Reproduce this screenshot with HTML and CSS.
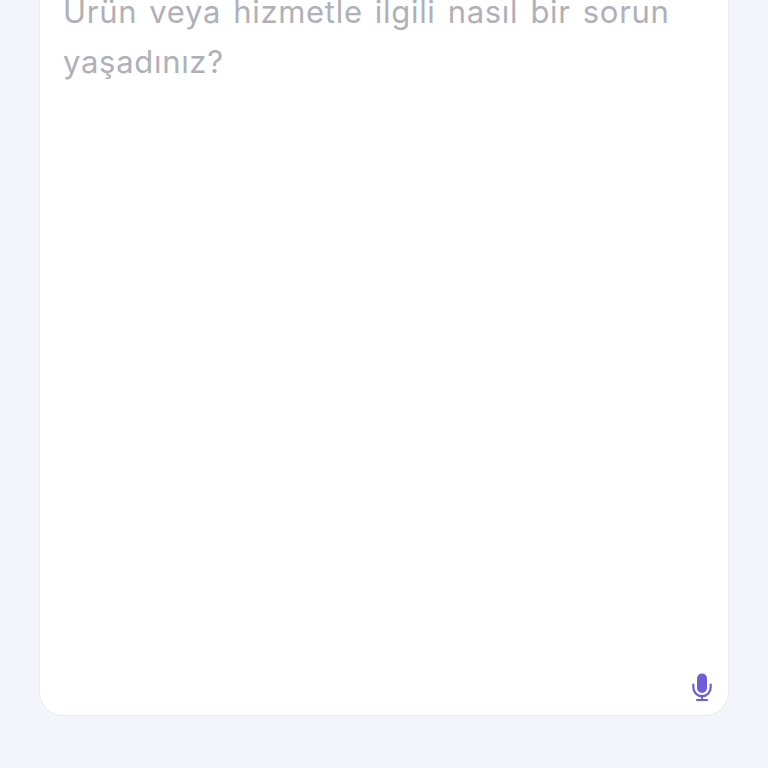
FILE: index.html
```html
<!DOCTYPE html>
<html lang="tr">
<head>
    <meta charset="UTF-8">
    <meta name="viewport" content="width=device-width, initial-scale=1.0">
    <title>Sorun bildir</title>
    <link rel="stylesheet" href="styles.css">
</head>
<body>
    <div class="page">
        <div class="card">
            <p class="placeholder">Ürün veya hizmetle ilgili nasıl bir sorun yaşadınız?</p>
            <div class="card-footer">
                <svg class="mic" width="20" height="28" viewBox="0 0 20 28" aria-hidden="true">
                    <rect x="5" y="0.5" width="10" height="19.5" rx="5" fill="#6f5fd6"/>
                    <path d="M1.3 11.5v3a8.7 8.7 0 0 0 17.4 0v-3" fill="none" stroke="#6f5fd6" stroke-width="2.2" stroke-linecap="round"/>
                    <path d="M10 23v4M5 27h10" fill="none" stroke="#6f5fd6" stroke-width="2" stroke-linecap="round"/>
                </svg>
            </div>
        </div>
    </div>
</body>
</html>
```

FILE: styles.css
```css
html, body {
    margin: 0;
    padding: 0;
}

body {
    background-color: #f4f5fa;
    font-family: "Inter", "Liberation Sans", sans-serif;
}

.page {
    height: 768px;
    overflow: hidden;
    box-sizing: border-box;
    display: flex;
    flex-direction: column;
    justify-content: flex-end;
    padding: 0 39px 52px 39px;
}

.card {
    flex: none;
    height: 740px;
    box-sizing: border-box;
    display: flex;
    flex-direction: column;
    justify-content: space-between;
    padding: 10px 16px 14px 23px;
    background-color: #fff;
    border: 1px solid #e9ebf2;
    border-radius: 24px;
}

.placeholder {
    margin: 0;
    font-size: 31px;
    line-height: 50px;
    letter-spacing: 0.7px;
    word-spacing: 2.7px;
    color: #b0b0b8;
}

.card-footer {
    display: flex;
    justify-content: flex-end;
}

.mic {
    display: block;
}
```
